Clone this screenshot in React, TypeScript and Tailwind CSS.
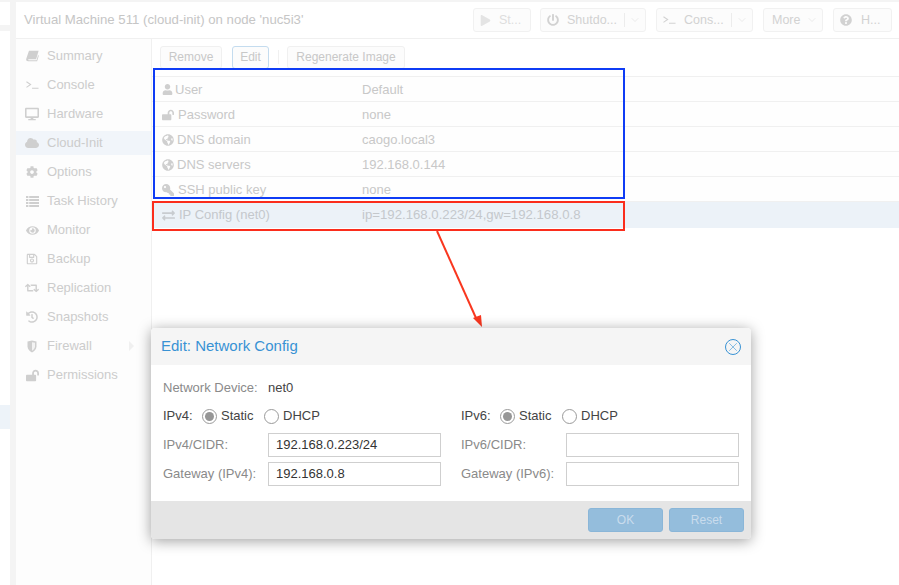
import {
  FaCloud,
  FaCog,
  FaDesktop,
  FaExchangeAlt,
  FaEye,
  FaGlobeAmericas,
  FaHistory,
  FaKey,
  FaLockOpen,
  FaPlay,
  FaPowerOff,
  FaQuestionCircle,
  FaRegSave,
  FaRetweet,
  FaUser,
} from "react-icons/fa";
import { ChevronDown, X } from "lucide-react";

function Prompt({ className }: { className?: string }) {
  return (
    <svg viewBox="0 0 14 10" className={className} fill="none" stroke="currentColor" strokeWidth="1.1">
      <path d="M0.5 1.5 L5 4.5 L0.5 7.5" />
      <path d="M6.5 8.5 H13.5" />
    </svg>
  );
}

function SlantBook() {
  return (
    <svg viewBox="0 0 14 12" className="w-[13px] h-[12px]" fill="currentColor">
      <path d="M3.2 0.3 H13.6 L10.9 9.4 H3 C2.2 9.4 2 10.6 3 10.6 H11.4 L13 5 L13.8 5.6 L12 11.7 H2.2 C0.6 11.7 -0.2 10.4 0.3 9 Z" />
    </svg>
  );
}

function HalfShield() {
  return (
    <svg viewBox="0 0 10 13" className="w-[10px] h-[13px]">
      <path d="M0.5 1.5 L5 0.5 L9.5 1.5 V6.5 C9.5 9.5 7 11.5 5 12.5 C3 11.5 0.5 9.5 0.5 6.5 Z" fill="currentColor" />
      <path d="M5 2.2 L8 2.8 V6.5 C8 8.4 6.4 9.9 5 10.7 Z" fill="#f3f3f3" />
    </svg>
  );
}

function ListRows() {
  return (
    <svg viewBox="0 0 13 11" className="w-[13px] h-[11px]" fill="currentColor">
      <path d="M0 0 H2.4 V2 H0 Z M3.2 0 H13 V2 H3.2 Z M0 3 H2.4 V5 H0 Z M3.2 3 H13 V5 H3.2 Z M0 6 H2.4 V8 H0 Z M3.2 6 H13 V8 H3.2 Z M0 9 H2.4 V11 H0 Z M3.2 9 H13 V11 H3.2 Z" />
    </svg>
  );
}

const navItems = [
  { label: "Summary", icon: <SlantBook /> },
  { label: "Console", icon: <Prompt className="w-[13px] h-[10px]" /> },
  { label: "Hardware", icon: <FaDesktop size={14} /> },
  { label: "Cloud-Init", icon: <FaCloud size={14} />, active: true },
  { label: "Options", icon: <FaCog size={12} /> },
  { label: "Task History", icon: <ListRows /> },
  { label: "Monitor", icon: <FaEye size={13} /> },
  { label: "Backup", icon: <FaRegSave size={12} /> },
  { label: "Replication", icon: <FaRetweet size={14} /> },
  { label: "Snapshots", icon: <FaHistory size={12} /> },
  { label: "Firewall", icon: <HalfShield />, arrow: true },
  { label: "Permissions", icon: <FaLockOpen size={13} /> },
];

const rows = [
  { icon: <FaUser size={11} />, label: "User", value: "Default", pad: "w-[14px]" },
  { icon: <FaLockOpen size={12} />, label: "Password", value: "none", pad: "w-[17px]" },
  { icon: <FaGlobeAmericas size={12} />, label: "DNS domain", value: "caogo.local3", pad: "w-[16px]" },
  { icon: <FaGlobeAmericas size={12} />, label: "DNS servers", value: "192.168.0.144", pad: "w-[16px]" },
  { icon: <FaKey size={12} className="-scale-x-100" />, label: "SSH public key", value: "none", pad: "w-[17px]" },
];

function ToolButton({ children, width }: { children: React.ReactNode; width: string }) {
  return (
    <div className={`${width} h-[24px] flex items-center border border-[#f1f1f1] rounded-[3px] bg-[#fcfcfc] text-[#d2d2d2] text-[12.5px]`}>
      {children}
    </div>
  );
}

function SplitArrow() {
  return (
    <div className="ml-auto h-[14px] w-[21px] border-l border-[#ececec] flex items-center justify-center">
      <ChevronDown size={12} strokeWidth={1} className="text-[#d8d8d8]" />
    </div>
  );
}

function Radio({ checked }: { checked?: boolean }) {
  return (
    <span className="w-[15px] h-[15px] rounded-full border border-[#9a9a9a] bg-white flex items-center justify-center shrink-0">
      {checked && <span className="w-[9px] h-[9px] rounded-full bg-[#969696]" />}
    </span>
  );
}

function IpColumn({ v, addr, gw }: { v: string; addr: string; gw: string }) {
  return (
    <div className="flex flex-col">
      <div className="flex items-center h-[24px] text-[#444]">
        <span className="w-[39px]">{v}:</span>
        <Radio checked />
        <span className="ml-[4px] w-[43px]">Static</span>
        <Radio />
        <span className="ml-[4px]">DHCP</span>
      </div>
      <div className="flex items-center h-[24px] mt-[5px]">
        <span className="text-[#8a8a8a]">{v}/CIDR:</span>
        <div className="ml-auto h-[24px] w-[173px] border border-[#cfcfcf] px-[7px] leading-[22px] text-[#333]">{addr}</div>
      </div>
      <div className="flex items-center h-[24px] mt-[5px]">
        <span className="text-[#8a8a8a]">Gateway ({v}):</span>
        <div className="ml-auto h-[24px] w-[173px] border border-[#cfcfcf] px-[7px] leading-[22px] text-[#333]">{gw}</div>
      </div>
    </div>
  );
}

export default function App() {
  return (
    <div className="relative w-[899px] h-[585px] overflow-hidden bg-[#f4f4f4] font-['Liberation_Sans',Arial,sans-serif] text-[12px]">
      <div className="flex h-full pt-[2px]">
        {/* tree column behind the panel */}
        <div className="w-[10px] shrink-0 flex flex-col">
          <div className="h-[23px] bg-white shrink-0" />
          <div className="flex-1 mt-[6px] bg-white pt-[374px]">
            <div className="h-[24px] bg-[#edf3f9]" />
          </div>
        </div>
        <div className="w-[6px] shrink-0" />

        <div className="flex-1 min-w-0 flex flex-col bg-white">
          <header className="h-[37px] shrink-0 border-b border-[#f0f0f0] flex items-center pl-[8px] pr-[7px]">
            <span className="text-[13.2px] text-[#c6c6c6]">Virtual Machine 511 (cloud-init) on node 'nuc5i3'</span>
            <div className="ml-auto flex gap-[10px] text-[#d2d2d2]">
              <ToolButton width="w-[58px] -mr-px">
                <FaPlay size={11} className="ml-[6px] text-[#e4e4e4]" />
                <span className="ml-[8px] text-[#dedede]">St...</span>
              </ToolButton>
              <ToolButton width="w-[106px]">
                <FaPowerOff size={12} className="ml-[6px]" />
                <span className="ml-[8px]">Shutdo...</span>
                <SplitArrow />
              </ToolButton>
              <ToolButton width="w-[97px]">
                <Prompt className="w-[13px] h-[10px] ml-[6px]" />
                <span className="ml-[8px]">Cons...</span>
                <SplitArrow />
              </ToolButton>
              <ToolButton width="w-[60px]">
                <span className="ml-[8px]">More</span>
                <ChevronDown size={12} strokeWidth={1} className="ml-[6px] text-[#d8d8d8]" />
              </ToolButton>
              <ToolButton width="w-[59px]">
                <FaQuestionCircle size={12} className="ml-[6px]" />
                <span className="ml-[9px]">H...</span>
              </ToolButton>
            </div>
          </header>

          <div className="flex-1 flex min-h-0">
            <nav className="w-[136px] shrink-0 border-r border-[#f0f0f0] bg-[#fdfdfd] flex flex-col gap-[5px] pt-[5px]">
              {navItems.map((item) => (
                <div
                  key={item.label}
                  className={`h-[24px] flex items-center text-[#cccccc] ${item.active ? "bg-[#f1f5fa]" : ""}`}
                >
                  <span className="w-[14px] ml-[9px] flex justify-center text-[#cfcfcf]">{item.icon}</span>
                  <span className="ml-[8px] text-[13px]">{item.label}</span>
                  {item.arrow && <span className="ml-auto mr-[17px] w-0 h-0 border-y-[5px] border-y-transparent border-l-[5px] border-l-[#f0f0f0]" />}
                </div>
              ))}
            </nav>

            <main className="flex-1 min-w-0 flex flex-col">
              <div className="flex items-center h-[37px] pl-[8px] pb-[1px] text-[#c8c8c8]">
                <div className="h-[23px] w-[62px] border border-[#f0f0f0] rounded-[3px] bg-[#fcfcfc] flex items-center justify-center">Remove</div>
                <div className="ml-[10px] h-[23px] w-[37px] border border-[#c4dcef] rounded-[3px] bg-[#fcfcfc] flex items-center justify-center">Edit</div>
                <div className="ml-[9px] h-[14px] border-l border-[#f0f0f0]" />
                <div className="ml-[8px] h-[23px] w-[118px] border border-[#f0f0f0] rounded-[3px] bg-[#fcfcfc] flex items-center justify-center">Regenerate Image</div>
              </div>
              <div className="border-t border-[#f0f0f0]">
                {rows.map((row) => (
                  <div key={row.label} className="h-[25px] border-b border-[#f0f0f0] flex items-center text-[#c8c8c8] bg-[#fefefe] pt-[1px] text-[13px]">
                    <div className="w-[210px] shrink-0 flex items-center pl-[10px]">
                      <span className={`${row.pad} shrink-0 text-[#cfcfcf]`}>{row.icon}</span>
                      <span className="-ml-px">{row.label}</span>
                    </div>
                    <span>{row.value}</span>
                  </div>
                ))}
                <div className="h-[26px] bg-[#ecf2f8] flex items-center text-[#c4c8cc] text-[13px]">
                  <div className="w-[210px] shrink-0 flex items-center pl-[10px]">
                    <FaExchangeAlt size={13} className="text-[#c8ccd0]" />
                    <span className="ml-[4px]">IP Config (net0)</span>
                  </div>
                  <span className="text-[13.2px]">ip=192.168.0.223/24,gw=192.168.0.8</span>
                </div>
              </div>
            </main>
          </div>
        </div>
      </div>

      {/* annotations */}
      <div className="absolute left-[153px] top-[68px] w-[472px] h-[131px] border-2 border-[#0f3cf5]" />
      <div className="absolute left-[152px] top-[201px] w-[473px] h-[30px] border-2 border-[#fb2d1c]" />
      <svg className="absolute left-[430px] top-[228px]" width="60" height="102" viewBox="0 0 60 102">
        <path d="M7 3 L46 90" stroke="#f9371f" strokeWidth="2" fill="none" />
        <path d="M52 99 L43 90 L51 87 Z" fill="#f9371f" />
      </svg>

      {/* dialog */}
      <div className="absolute left-[151px] top-[328px] w-[600px] h-[211px] rounded-[4px] bg-white shadow-[0_2px_14px_rgba(0,0,0,0.38)] overflow-hidden flex flex-col text-[13px]">
        <div className="h-[37px] shrink-0 bg-[#f5f5f5] flex items-center pl-[10px] pr-[10px]">
          <span className="text-[15px] text-[#3892d4]">Edit: Network Config</span>
          <span className="ml-auto w-[16px] h-[16px] rounded-full border border-[#3892d4] flex items-center justify-center">
            <X size={14} strokeWidth={1} className="text-[#3892d4]" />
          </span>
        </div>
        <div className="flex-1 pl-[12px] pr-[12px] pt-[13px]">
          <div className="flex h-[20px] items-center">
            <span className="w-[105px] text-[#8a8a8a]">Network Device:</span>
            <span className="text-[#444]">net0</span>
          </div>
          <div className="flex gap-[20px] mt-[6px]">
            <div className="w-[278px]">
              <IpColumn v="IPv4" addr="192.168.0.223/24" gw="192.168.0.8" />
            </div>
            <div className="w-[278px]">
              <IpColumn v="IPv6" addr="" gw="" />
            </div>
          </div>
        </div>
        <div className="h-[38px] shrink-0 bg-[#e5e5e5] flex items-center justify-end gap-[6px] pr-[7px]">
          <div className="w-[75px] h-[24px] rounded-[3px] bg-[#94bddc] border border-[#8ab6d8] text-[#c9dced] text-[12px] flex items-center justify-center">OK</div>
          <div className="w-[75px] h-[24px] rounded-[3px] bg-[#94bddc] border border-[#8ab6d8] text-[#c9dced] text-[12px] flex items-center justify-center">Reset</div>
        </div>
      </div>
    </div>
  );
}
